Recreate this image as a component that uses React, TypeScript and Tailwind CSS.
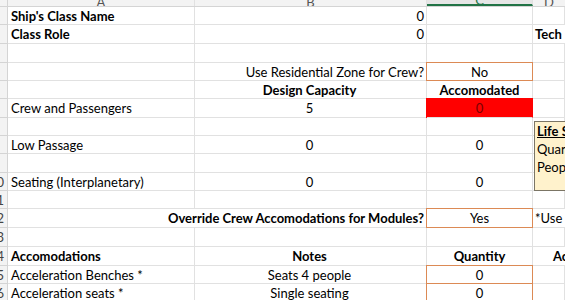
import clsx from 'clsx';

type Cell = {
  text?: string;
  bold?: boolean;
  align?: 'left' | 'center' | 'right';
  kind?: 'input' | 'alert';
  spill?: boolean;
  indent?: string;
};

type Row = {
  n: number;
  h: string;
  a?: Cell;
  b?: Cell;
  c?: Cell;
  d?: Cell;
};

const rows: Row[] = [
  { n: 1, h: 'h-[18px]', a: { text: "Ship's Class Name", bold: true }, b: { text: '0', align: 'right' } },
  { n: 2, h: 'h-[19px]', a: { text: 'Class Role', bold: true }, b: { text: '0', align: 'right' }, d: { text: 'Tech Level', bold: true } },
  { n: 3, h: 'h-[19px]' },
  { n: 4, h: 'h-[18px]', b: { text: 'Use Residential Zone for Crew?', align: 'right' }, c: { text: 'No', align: 'center', kind: 'input' } },
  { n: 5, h: 'h-[18px]', b: { text: 'Design Capacity', bold: true, align: 'center' }, c: { text: 'Accomodated', bold: true, align: 'center' } },
  { n: 6, h: 'h-[19px]', a: { text: 'Crew and Passengers' }, b: { text: '5', align: 'center' }, c: { text: '0', align: 'center', kind: 'alert' } },
  { n: 7, h: 'h-[18px]' },
  { n: 8, h: 'h-[18px]', a: { text: 'Low Passage' }, b: { text: '0', align: 'center' }, c: { text: '0', align: 'center' } },
  { n: 9, h: 'h-[19px]' },
  { n: 10, h: 'h-[18px]', a: { text: 'Seating (Interplanetary)' }, b: { text: '0', align: 'center' }, c: { text: '0', align: 'center' } },
  { n: 11, h: 'h-[18px]' },
  {
    n: 12,
    h: 'h-[19px]',
    a: { spill: true },
    b: { text: 'Override Crew Accomodations for Modules?', bold: true, align: 'right' },
    c: { text: 'Yes', align: 'center', kind: 'input' },
    d: { text: '*Use module values' },
  },
  { n: 13, h: 'h-[19px]' },
  {
    n: 14,
    h: 'h-[19px]',
    a: { text: 'Accomodations', bold: true },
    b: { text: 'Notes', bold: true, align: 'center' },
    c: { text: 'Quantity', bold: true, align: 'center' },
    d: { text: 'Accom. Tons', bold: true, indent: 'pl-[20px]' },
  },
  { n: 15, h: 'h-[18px]', a: { text: 'Acceleration Benches *' }, b: { text: 'Seats 4 people', align: 'center' }, c: { text: '0', align: 'center', kind: 'input' } },
  { n: 16, h: 'h-[19px]', a: { text: 'Acceleration seats *' }, b: { text: 'Single seating', align: 'center' }, c: { text: '0', align: 'center', kind: 'input' } },
];

function GridCell({ cell, pad }: { cell?: Cell; pad: string }) {
  const c = cell ?? {};
  return (
    <div
      className={clsx(
        'relative flex items-center overflow-visible whitespace-nowrap border-b',
        c.indent ?? pad,
        c.spill ? 'border-b-[#e1e1e1]' : 'border-r border-[#e1e1e1]',
        c.align === 'center' && 'justify-center',
        c.align === 'right' && 'justify-end',
        c.bold && 'font-bold',
        c.kind === 'input' &&
          'border-r-[#dc8a55] border-b-[#dc8a55] shadow-[0_-1px_0_#dc8a55,-1px_0_0_#dc8a55,-1px_-1px_0_#dc8a55]',
        c.kind === 'alert' &&
          'bg-[#ff0000] text-[#7a0000] border-r-[#ff0000] shadow-[0_-1px_0_#ff0000,-1px_0_0_#ff0000,-1px_-1px_0_#ff0000]'
      )}
    >
      {c.text}
    </div>
  );
}

export default function App() {
  return (
    <div className="relative h-[300px] w-[565px] overflow-hidden bg-white font-[Lato,sans-serif] text-[13px] leading-[16px] text-black">
      {/* column headers, mostly scrolled out of view */}
      <div className="grid h-[7px] grid-cols-[8px_187px_232px_106px_1fr] overflow-hidden border-b border-[#d4d4d4] bg-[#f3f3f3] text-[#555]">
        <div className="border-r border-[#d4d4d4]" />
        <div className="flex items-end justify-center overflow-hidden border-r border-[#e1e1e1] leading-[8px]">A</div>
        <div className="flex items-end justify-center overflow-hidden border-r border-[#e1e1e1] leading-[8px]">B</div>
        <div className="flex items-end justify-center overflow-hidden border-b-2 border-r border-b-[#217346] border-r-[#e1e1e1] bg-[#e6e6e6] leading-[7px] text-[#217346]">
          C
        </div>
        <div className="flex items-end justify-center overflow-hidden leading-[8px]">D</div>
      </div>

      {rows.map((r) => (
        <div key={r.n} className={clsx('grid grid-cols-[8px_187px_232px_106px_1fr]', r.h)}>
          <div className="flex items-center justify-end overflow-hidden border-b border-r border-[#d4d4d4] bg-[#f3f3f3] pr-[3px] text-[#444]">
            {r.n >= 10 ? r.n : ''}
          </div>
          <GridCell cell={r.a} pad="pl-[3px]" />
          <GridCell cell={r.b} pad="pr-[2px]" />
          <GridCell cell={r.c} pad="" />
          <GridCell cell={r.d} pad="pl-[2px]" />
        </div>
      ))}

      {/* cell comment popup */}
      <div className="absolute left-[534px] top-[121px] h-[70px] w-[140px] border border-[#7b7565] bg-[#fff2cc] pl-[2px] leading-[18px]">
        <div className="font-bold underline">Life Support</div>
        <div>Quarters</div>
        <div>People</div>
      </div>
    </div>
  );
}
